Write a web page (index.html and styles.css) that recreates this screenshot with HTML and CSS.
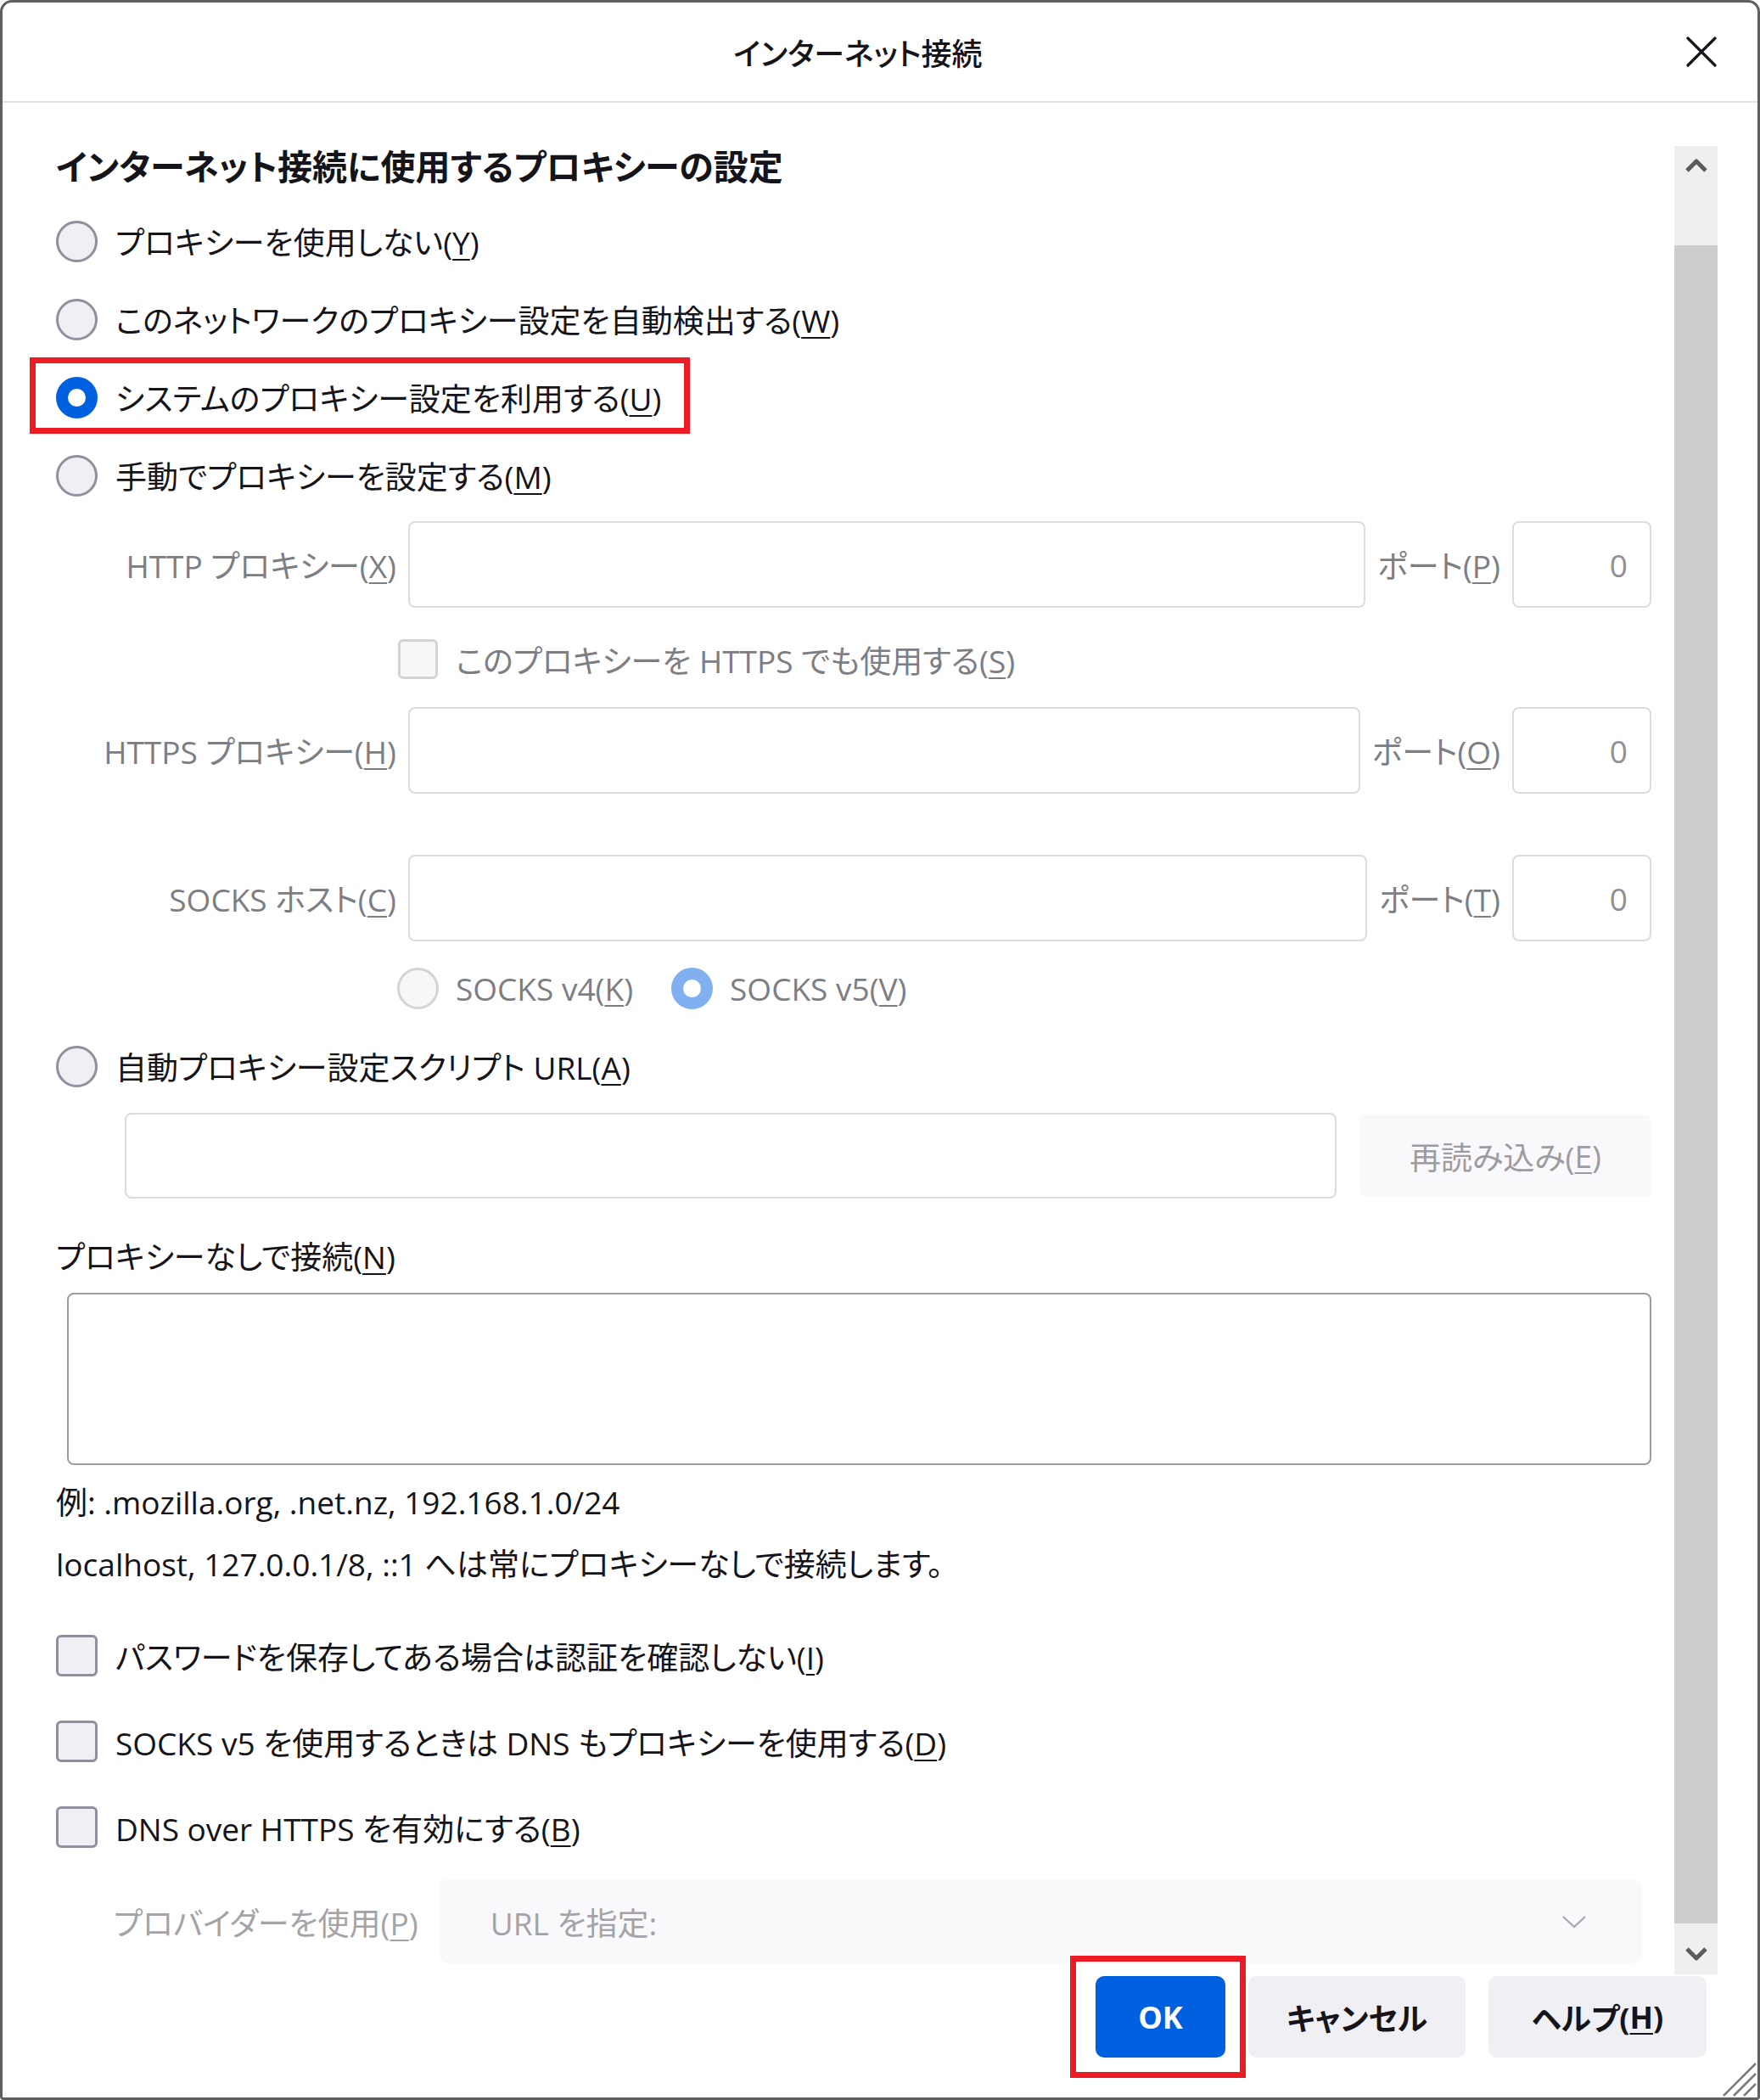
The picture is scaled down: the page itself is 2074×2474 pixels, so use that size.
FILE: index.html
```html
<!DOCTYPE html>
<html lang="ja">

<head>
    <meta charset="UTF-8">
    <meta name="viewport" content="width=device-width, initial-scale=1.0">
    <title>インターネット接続</title>
    <link rel="stylesheet" href="styles.css">
</head>

<body>
    <div class="window">
        <div class="titlebar">
            <div class="title">インターネット接続</div>
            <svg class="close" viewBox="0 0 36 36">
                <path d="M2 2L34 34M34 2L2 34" stroke="#15141a" stroke-width="3.2" stroke-linecap="round" fill="none" />
            </svg>
        </div>

        <div class="scroll">
            <div class="content">
                <div class="heading">インターネット接続に使用するプロキシーの設定</div>

                <div class="option"><span class="radio"></span><span>プロキシーを使用しない(<u>Y</u>)</span></div>
                <div class="option"><span class="radio"></span><span>このネットワークのプロキシー設定を自動検出する(<u>W</u>)</span></div>
                <div class="option marked">
                    <span class="radio checked"></span><span>システムのプロキシー設定を利用する(<u>U</u>)</span>
                    <span class="annot"></span>
                </div>
                <div class="option"><span class="radio"></span><span>手動でプロキシーを設定する(<u>M</u>)</span></div>

                <div class="manual">
                    <div class="field-row">
                        <span class="field-label">HTTP プロキシー(<u>X</u>)</span>
                        <div class="box"></div>
                        <span class="port-label">ポート(<u>P</u>)</span>
                        <div class="box port">0</div>
                    </div>
                    <div class="sub-check">
                        <span class="check off"></span><span>このプロキシーを HTTPS でも使用する(<u>S</u>)</span>
                    </div>
                    <div class="field-row https">
                        <span class="field-label">HTTPS プロキシー(<u>H</u>)</span>
                        <div class="box"></div>
                        <span class="port-label">ポート(<u>O</u>)</span>
                        <div class="box port">0</div>
                    </div>
                    <div class="field-row socks">
                        <span class="field-label">SOCKS ホスト(<u>C</u>)</span>
                        <div class="box"></div>
                        <span class="port-label">ポート(<u>T</u>)</span>
                        <div class="box port">0</div>
                    </div>
                    <div class="socks-ver">
                        <span class="radio off"></span><span>SOCKS v4(<u>K</u>)</span>
                        <span class="radio off checked v5"></span><span>SOCKS v5(<u>V</u>)</span>
                    </div>
                </div>

                <div class="option auto"><span class="radio"></span><span>自動プロキシー設定スクリプト URL(<u>A</u>)</span></div>
                <div class="auto-row">
                    <div class="box url"></div>
                    <div class="btn-reload">再読み込み(<u>E</u>)</div>
                </div>

                <div class="label-line">プロキシーなしで接続(<u>N</u>)</div>
                <div class="textarea"></div>
                <div class="note first">例: .mozilla.org, .net.nz, 192.168.1.0/24</div>
                <div class="note">localhost, 127.0.0.1/8, ::1 へは常にプロキシーなしで接続します。</div>

                <div class="checks">
                    <div class="check-row"><span class="check"></span><span>パスワードを保存してある場合は認証を確認しない(<u>I</u>)</span></div>
                    <div class="check-row"><span class="check"></span><span>SOCKS v5 を使用するときは DNS もプロキシーを使用する(<u>D</u>)</span></div>
                    <div class="check-row"><span class="check"></span><span>DNS over HTTPS を有効にする(<u>B</u>)</span></div>
                </div>

                <div class="provider-row">
                    <span class="provider-label">プロバイダーを使用(<u>P</u>)</span>
                    <div class="select">
                        <span>URL を指定:</span>
                        <svg class="select-arrow" viewBox="0 0 30 16">
                            <polyline points="2,2 15,14 28,2" stroke="#a6a6ad" stroke-width="2.2" fill="none" />
                        </svg>
                    </div>
                </div>
            </div>

            <div class="scrollbar">
                <div class="sb-up">
                    <svg viewBox="0 0 30 20"><polyline points="4,16 15,5 26,16" stroke="#5b5b5b" stroke-width="5" fill="none" stroke-linejoin="round" /></svg>
                </div>
                <div class="sb-thumb"></div>
                <div class="sb-down">
                    <svg viewBox="0 0 30 20"><polyline points="4,4 15,15 26,4" stroke="#5b5b5b" stroke-width="5" fill="none" stroke-linejoin="round" /></svg>
                </div>
            </div>
        </div>

        <div class="buttons">
            <div class="btn primary">OK<span class="annot"></span></div>
            <div class="btn">キャンセル</div>
            <div class="btn">ヘルプ(<u>H</u>)</div>
        </div>

        <svg class="grip" viewBox="0 0 48 48">
            <path d="M46 8L8 46M46 20L20 46M46 32L32 46" stroke="#7a7a7a" stroke-width="2.5" fill="none" />
        </svg>
    </div>
</body>

</html>
```

FILE: styles.css
```css
body{
    margin: 0;
    font-family: "Open Sans", "Noto Sans CJK JP", sans-serif;
    font-feature-settings: "palt";
    color: #15141a;
    background: #fff;
}

u{
    text-decoration-thickness: 2px;
    text-underline-offset: 5px;
}

.window{
    width: 2074px;
    height: 2474px;
    box-sizing: border-box;
    border: 3px solid #5f5f5f;
    border-radius: 14px 14px 4px 4px;
    background: #fff;
    display: flex;
    flex-direction: column;
    position: relative;
    overflow: hidden;
}

.titlebar{
    height: 116px;
    flex-shrink: 0;
    border-bottom: 2px solid #e2e2e6;
    display: flex;
    align-items: center;
}

.title{
    flex: 1;
    text-align: center;
    padding-left: 32px;
    font-size: 36px;
    font-weight: 500;
}

.close{
    width: 36px;
    height: 36px;
    margin-right: 48px;
}

.scroll{
    height: 2154px;
    flex-shrink: 0;
    margin: 51px 47px 0 63px;
    display: flex;
}

.content{
    flex: 1;
    padding-right: 27px;
    font-size: 37px;
}

.heading{
    font-size: 41px;
    font-weight: bold;
    line-height: 48px;
    margin-bottom: 18px;
}

.option{
    height: 92px;
    display: flex;
    align-items: center;
    gap: 21px;
    position: relative;
}

.radio{
    width: 49px;
    height: 49px;
    box-sizing: border-box;
    border-radius: 50%;
    border: 3px solid #8f8f9d;
    background: #f0f0f4;
    flex-shrink: 0;
}

.radio.checked{
    border: 14px solid #0061e0;
    background: #fff;
}

.radio.off{
    border-color: #d4d4d8;
    background: #f7f7f9;
}

.radio.off.checked{
    border: 14px solid #80b0f0;
    background: #fff;
}

.annot{
    position: absolute;
    box-sizing: border-box;
    border: 7px solid #ed1c24;
    pointer-events: none;
}

.marked .annot{
    left: -31px;
    top: -1px;
    width: 778px;
    height: 90px;
}

.manual{
    margin-top: 8px;
    color: #7d7d84;
}

.field-row{
    height: 102px;
    display: flex;
    align-items: center;
}

.field-row.https{
    margin-top: 33px;
}

.field-row.socks{
    margin-top: 72px;
}

.field-label{
    width: 401px;
    margin-right: 14px;
    text-align: right;
    flex-shrink: 0;
}

.box{
    flex: 1;
    height: 100%;
    box-sizing: border-box;
    border: 2px solid #dcdce0;
    border-radius: 8px;
    background: #fff;
}

.port-label{
    margin: 0 14px;
    flex-shrink: 0;
}

.box.port{
    flex: none;
    width: 164px;
    display: flex;
    align-items: center;
    justify-content: flex-end;
    padding-right: 26px;
    color: #8f8f96;
}

.sub-check{
    margin: 37px 0 0 403px;
    height: 47px;
    display: flex;
    align-items: center;
    gap: 21px;
}

.check{
    width: 49px;
    height: 49px;
    box-sizing: border-box;
    border: 3px solid #8f8f9d;
    border-radius: 6px;
    background: #f0f0f4;
    flex-shrink: 0;
}

.check.off{
    width: 47px;
    height: 47px;
    border-color: #d4d4d8;
    background: #f7f7f9;
}

.socks-ver{
    margin: 31px 0 0 402px;
    height: 49px;
    display: flex;
    align-items: center;
    gap: 20px;
}

.radio.v5{
    margin-left: 25px;
}

.option.auto{
    margin-top: 21px;
}

.auto-row{
    margin: 9px 0 0 81px;
    height: 101px;
    display: flex;
    align-items: center;
    gap: 27px;
}

.btn-reload{
    width: 344px;
    height: 97px;
    border-radius: 8px;
    background: #f9f9fb;
    color: #9c9ca2;
    display: flex;
    align-items: center;
    justify-content: center;
}

.label-line{
    margin-top: 45px;
    line-height: 48px;
}

.textarea{
    margin: 18px 0 0 13px;
    height: 203px;
    box-sizing: border-box;
    border: 2px solid #9c9ca4;
    border-radius: 8px;
}

.note{
    margin-top: 25px;
    line-height: 48px;
}

.note.first{
    margin-top: 20px;
}

.checks{
    margin-top: 33px;
}

.check-row{
    height: 101px;
    display: flex;
    align-items: center;
    gap: 21px;
}

.provider-row{
    margin: 11px 11px 0 68px;
    height: 99px;
    display: flex;
    align-items: center;
    gap: 25px;
    color: #a3a3a9;
}

.select{
    flex: 1;
    height: 100%;
    border-radius: 10px;
    background: #f9f9fb;
    display: flex;
    align-items: center;
    justify-content: space-between;
    padding: 0 65px 0 60px;
}

.select-arrow{
    width: 30px;
    height: 16px;
}

.scrollbar{
    width: 51px;
    background: #efefef;
    display: flex;
    flex-direction: column;
}

.sb-up{
    height: 46px;
    display: flex;
    align-items: center;
    justify-content: center;
}

.sb-up svg, .sb-down svg{
    width: 30px;
    height: 20px;
}

.sb-thumb{
    margin-top: 71px;
    height: 1977px;
    background: #cdcdcd;
}

.sb-down{
    flex: 1;
    display: flex;
    align-items: center;
    justify-content: center;
    padding-top: 12px;
}

.buttons{
    flex: 1;
    display: flex;
    justify-content: flex-end;
    align-items: flex-start;
    gap: 27px;
    padding: 2px 60px 0 0;
}

.btn{
    width: 257px;
    height: 96px;
    border-radius: 10px;
    background: #f0f0f4;
    font-size: 36px;
    font-weight: bold;
    display: flex;
    align-items: center;
    justify-content: center;
    position: relative;
}

.btn:nth-child(2){
    width: 256px;
}

.btn.primary{
    width: 153px;
    background: #0061e0;
    color: #fff;
}

.btn .annot{
    left: -30px;
    top: -24px;
    right: -24px;
    bottom: -24px;
}

.grip{
    position: absolute;
    right: 0;
    bottom: 0;
    width: 48px;
    height: 48px;
}
```
